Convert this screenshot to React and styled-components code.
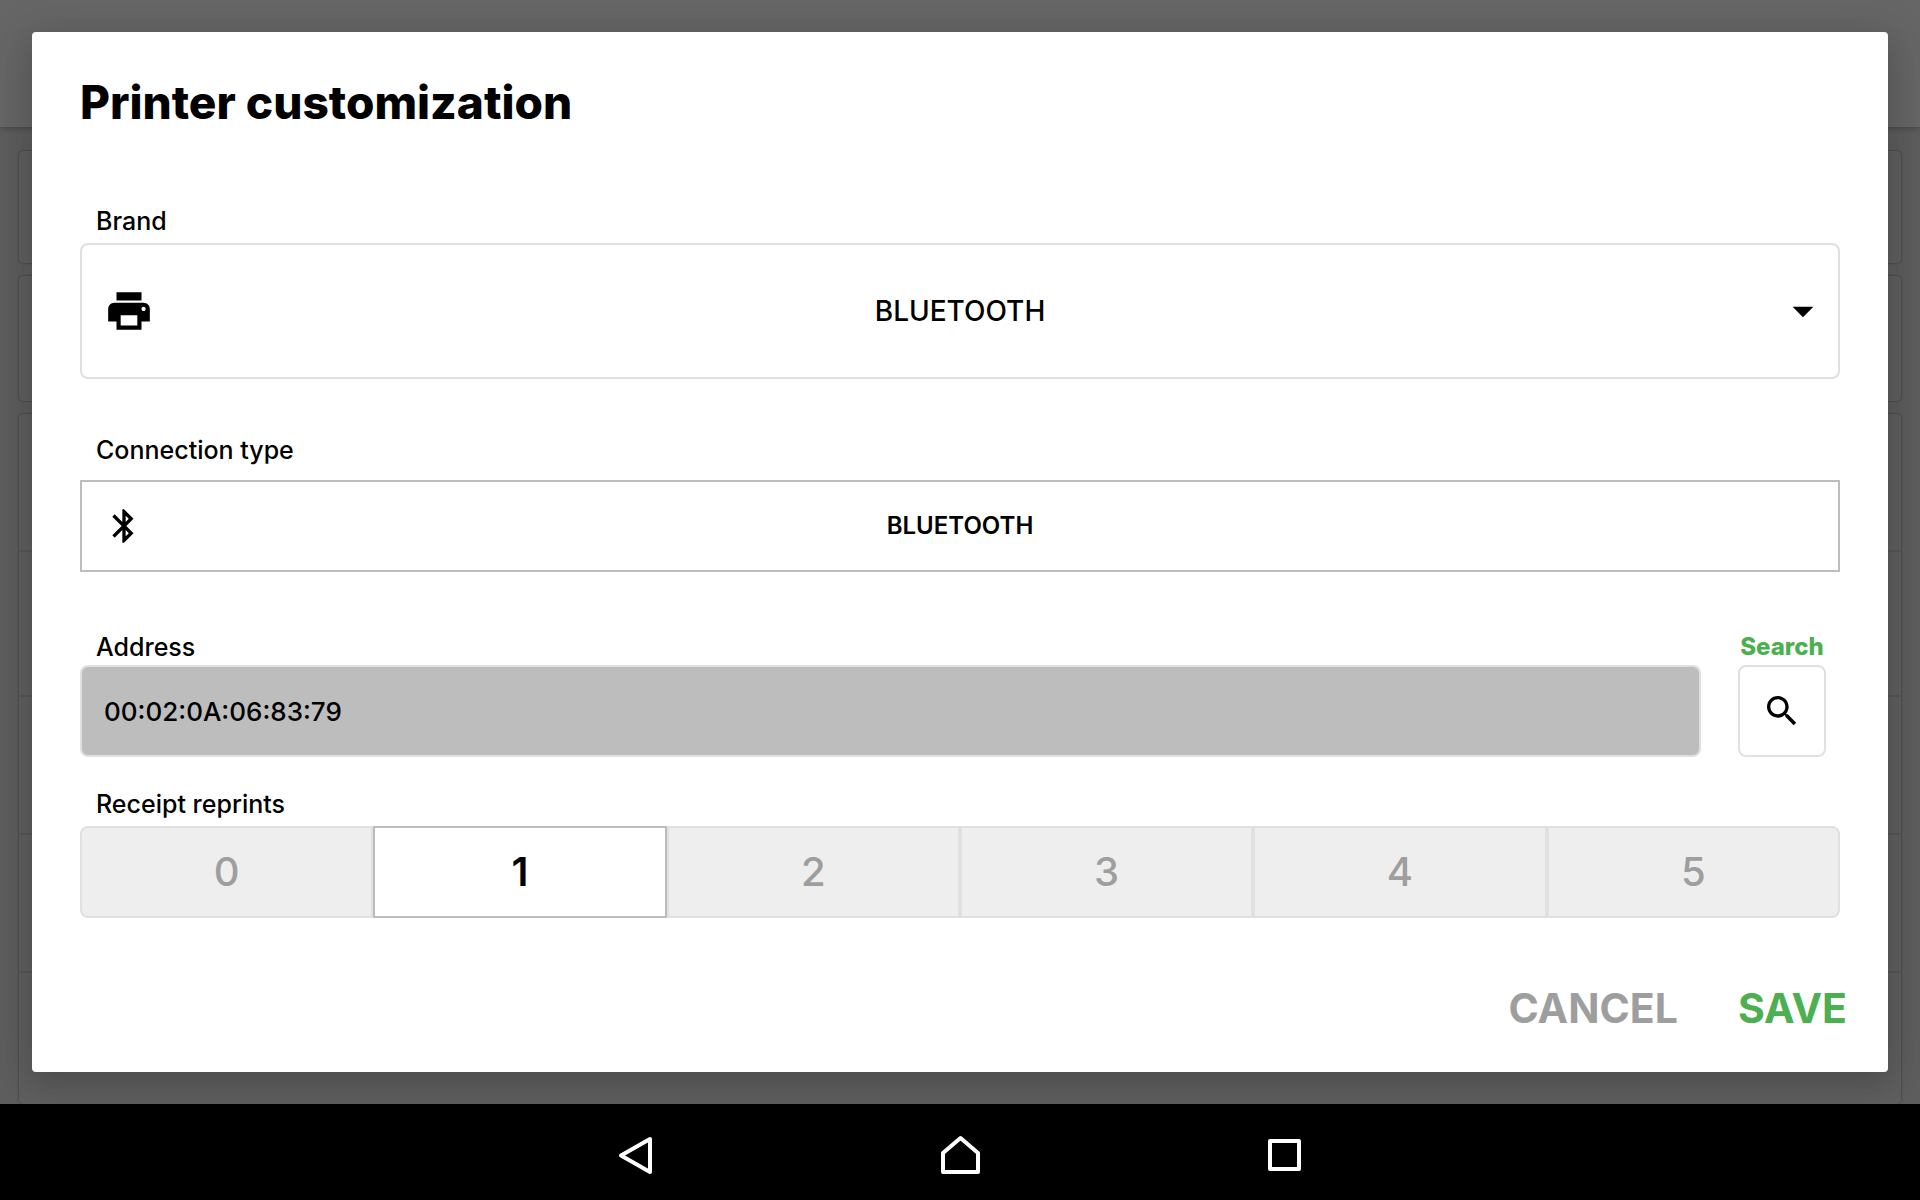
import React, { useState } from 'react';
import styled, { createGlobalStyle } from 'styled-components';

const GlobalStyle = createGlobalStyle`
  *, *::before, *::after { box-sizing: border-box; }
  body {
    margin: 0;
    background: #000;
    color: #000;
    font-family: Inter, "Liberation Sans", sans-serif;
  }
  button, input, select { font: inherit; color: inherit; margin: 0; }
`;

const Screen = styled.div`
  min-height: 100vh;
  display: flex;
  flex-direction: column;
`;

const Stage = styled.div`
  flex: 1;
  display: grid;
  overflow: hidden;
  > * { grid-area: 1 / 1; }
`;

/* Settings page behind the dialog */
const Page = styled.div`
  display: flex;
  flex-direction: column;
  background: #ebebeb;
`;

const PageHeader = styled.div`
  height: 127px;
  background: #fff;
  box-shadow: 0 1px 6px rgba(0, 0, 0, 0.3);
`;

const CardList = styled.div`
  flex: 1;
  display: flex;
  flex-direction: column;
  gap: 13px;
  padding: 24px 19px 0;
`;

const Card = styled.div`
  flex: ${(p) => (p.$fill ? '1' : 'none')};
  height: ${(p) => (p.$height ? `${p.$height}px` : 'auto')};
  background: #efefef;
  border-radius: 4px;
  box-shadow: 0 0 2px rgba(0, 0, 0, 0.55);
`;

const CardRow = styled.div`
  height: ${(p) => p.$height}px;
  border-bottom: 2px solid #dadada;
`;

const Overlay = styled.div`
  display: flex;
  padding: 32px;
  background: rgba(0, 0, 0, 0.6);
`;

const Dialog = styled.form`
  flex: 1;
  min-width: 0;
  display: flex;
  flex-direction: column;
  padding: 42px 48px 32px;
  background: #fff;
  border-radius: 4px;
  box-shadow:
    0 12px 30px rgba(0, 0, 0, 0.1),
    0 9px 46px 8px rgba(0, 0, 0, 0.12);
`;

const Title = styled.h1`
  margin: 0 0 75px;
  font-size: 46px;
  line-height: 56px;
  font-weight: 800;
`;

const Field = styled.div`
  display: flex;
  flex-direction: column;
  gap: ${(p) => p.$gap}px;
  margin-bottom: ${(p) => p.$space}px;
`;

const Group = styled(Field).attrs({ role: 'radiogroup' })``;

const Label = styled.label`
  padding-left: 16px;
  font-size: 25px;
  line-height: 32px;
  font-weight: 500;
`;

const SelectBox = styled.div`
  display: grid;
  align-items: center;
  > * { grid-area: 1 / 1; }
  > svg { pointer-events: none; }
`;

const Select = styled.select`
  appearance: none;
  width: 100%;
  height: 136px;
  padding: 0 64px;
  border: 2px solid #e0e0e0;
  border-radius: 8px;
  background: #fff;
  font-size: 28px;
  font-weight: 500;
  text-align: center;
  text-align-last: center;
`;

const Icon = styled.svg`
  width: ${(p) => p.$size}px;
  height: ${(p) => p.$size}px;
  fill: currentColor;
`;

const StartIcon = styled(Icon)`
  margin-left: 24px;
`;

const EndIcon = styled(Icon)`
  justify-self: end;
  margin-right: 12px;
`;

const HiddenRadio = styled.input.attrs({ type: 'radio' })`
  appearance: none;
  position: absolute;
  width: 1px;
  height: 1px;
  opacity: 0;
`;

const ConnectionOption = styled.label`
  display: grid;
  align-items: center;
  height: 92px;
  border: 2px solid #bdbdbd;
  > * { grid-area: 1 / 1; }
  > svg { margin-left: 22px; }
`;

const OptionText = styled.span`
  justify-self: center;
  font-size: 24px;
  line-height: 32px;
  font-weight: 600;
`;

const AddressRow = styled.div`
  display: flex;
  gap: 37px;
  padding-right: 14px;
  margin-bottom: 31px;
`;

const AddressField = styled(Field)`
  flex: 1;
  min-width: 0;
`;

const AddressInput = styled.input`
  width: 100%;
  height: 92px;
  padding: 0 22px;
  border: 2px solid #e0e0e0;
  border-radius: 8px;
  background: #bdbdbd;
  font-size: 26px;
  font-weight: 500;
`;

const SearchField = styled(Field)`
  width: 88px;
`;

const SearchLabel = styled.label`
  align-self: center;
  font-size: 24px;
  line-height: 32px;
  font-weight: 800;
  color: #4caf50;
`;

const SearchButton = styled.button`
  display: grid;
  place-items: center;
  height: 92px;
  padding: 0;
  border: 2px solid #e0e0e0;
  border-radius: 8px;
  background: #fff;
`;

const Segments = styled.div`
  display: flex;
`;

const Segment = styled.label`
  flex: 1;
  display: grid;
  place-items: center;
  height: 92px;
  border: 2px solid ${(p) => (p.$on ? '#bdbdbd' : '#e0e0e0')};
  background: ${(p) => (p.$on ? '#fff' : '#eee')};
  color: ${(p) => (p.$on ? '#000' : '#9e9e9e')};
  font-size: 40px;
  line-height: 48px;
  font-weight: ${(p) => (p.$on ? 600 : 500)};
  &:first-child { border-radius: 8px 0 0 8px; }
  &:last-child { border-radius: 0 8px 8px 0; }
`;

const Actions = styled.div`
  display: flex;
  justify-content: flex-end;
  gap: 60px;
  margin-top: auto;
  margin-right: -7px;
`;

const Action = styled.button`
  height: 64px;
  padding: 0;
  border: 0;
  background: none;
  color: ${(p) => (p.$primary ? '#4caf50' : '#9e9e9e')};
  font-size: 41px;
  line-height: 48px;
  font-weight: 700;
`;

const NavBar = styled.nav`
  display: flex;
  justify-content: center;
  height: 96px;
  background: #000;
`;

const NavButton = styled.button`
  display: grid;
  place-items: center;
  width: 324px;
  padding: 0;
  border: 0;
  background: none;
`;

const NavGlyph = styled.svg.attrs({ viewBox: '0 0 48 48' })`
  width: 48px;
  height: 48px;
  fill: none;
  stroke: #fff;
  stroke-width: 4px;
  stroke-linejoin: round;
`;

const paths = {
  printer:
    'M19 8H5c-1.66 0-3 1.34-3 3v6h4v4h12v-4h4v-6c0-1.66-1.34-3-3-3zm-3 11H8v-5h8v5zm3-7c-.55 0-1-.45-1-1s.45-1 1-1 1 .45 1 1-.45 1-1 1zm-1-9H6v4h12V3z',
  caret: 'M7 10l5 5 5-5z',
  bluetooth:
    'M17.71 7.71L12 2h-1v7.59L6.41 5 5 6.41 10.59 12 5 17.59 6.41 19 11 14.41V22h1l5.71-5.71-4.3-4.29 4.3-4.29zM13 5.83l1.88 1.88L13 9.59V5.83zm1.88 10.46L13 18.17v-3.76l1.88 1.88z',
  search:
    'M15.5 14h-.79l-.28-.27C15.41 12.59 16 11.11 16 9.5 16 5.91 13.09 3 9.5 3S3 5.91 3 9.5 5.91 16 9.5 16c1.61 0 3.09-.59 4.23-1.57l.27.28v.79l5 4.99L20.49 19l-4.99-5zm-6 0C7.01 14 5 11.99 5 9.5S7.01 5 9.5 5 14 7.01 14 9.5 11.99 14 9.5 14z',
};

const navItems = [
  { name: 'Back', d: 'M38 11V44L9 27.5Z' },
  { name: 'Home', d: 'M24.5 10L42 25V44H7V25Z' },
  { name: 'Recent apps', d: 'M10 13H39V41H10Z' },
];

export default function App() {
  const [reprints, setReprints] = useState(1);

  return (
    <Screen>
      <GlobalStyle />
      <Stage>
        <Page aria-hidden="true">
          <PageHeader />
          <CardList>
            <Card $height={112} />
            <Card $height={125} />
            <Card $fill>
              <CardRow $height={138} />
              <CardRow $height={145} />
              <CardRow $height={138} />
              <CardRow $height={138} />
            </Card>
          </CardList>
        </Page>
        <Overlay>
          <Dialog role="dialog" aria-labelledby="dialog-title" onSubmit={(e) => e.preventDefault()}>
            <Title id="dialog-title">Printer customization</Title>

            <Field $gap={6} $space={55}>
              <Label htmlFor="brand">Brand</Label>
              <SelectBox>
                <Select id="brand" defaultValue="BLUETOOTH">
                  <option>BLUETOOTH</option>
                </Select>
                <StartIcon $size={50} viewBox="0 0 24 24"><path d={paths.printer} /></StartIcon>
                <EndIcon $size={50} viewBox="0 0 24 24"><path d={paths.caret} /></EndIcon>
              </SelectBox>
            </Field>

            <Group $gap={14} $space={59} aria-labelledby="connection-label">
              <Label as="span" id="connection-label">Connection type</Label>
              <ConnectionOption>
                <HiddenRadio name="connection" defaultChecked />
                <Icon $size={40} viewBox="0 0 24 24"><path d={paths.bluetooth} /></Icon>
                <OptionText>BLUETOOTH</OptionText>
              </ConnectionOption>
            </Group>

            <AddressRow>
              <AddressField $gap={2} $space={0}>
                <Label htmlFor="address">Address</Label>
                <AddressInput id="address" readOnly value="00:02:0A:06:83:79" />
              </AddressField>
              <SearchField $gap={2} $space={0}>
                <SearchLabel htmlFor="search">Search</SearchLabel>
                <SearchButton id="search" type="button">
                  <Icon $size={40} viewBox="0 0 24 24"><path d={paths.search} /></Icon>
                </SearchButton>
              </SearchField>
            </AddressRow>

            <Group $gap={6} $space={58} aria-labelledby="reprints-label">
              <Label as="span" id="reprints-label">Receipt reprints</Label>
              <Segments>
                {[0, 1, 2, 3, 4, 5].map((n) => (
                  <Segment key={n} $on={n === reprints}>
                    <HiddenRadio
                      name="reprints"
                      value={n}
                      checked={n === reprints}
                      onChange={() => setReprints(n)}
                    />
                    {n}
                  </Segment>
                ))}
              </Segments>
            </Group>

            <Actions>
              <Action type="button">CANCEL</Action>
              <Action type="submit" $primary>SAVE</Action>
            </Actions>
          </Dialog>
        </Overlay>
      </Stage>
      <NavBar>
        {navItems.map((item) => (
          <NavButton key={item.name} type="button" aria-label={item.name}>
            <NavGlyph><path d={item.d} /></NavGlyph>
          </NavButton>
        ))}
      </NavBar>
    </Screen>
  );
}
